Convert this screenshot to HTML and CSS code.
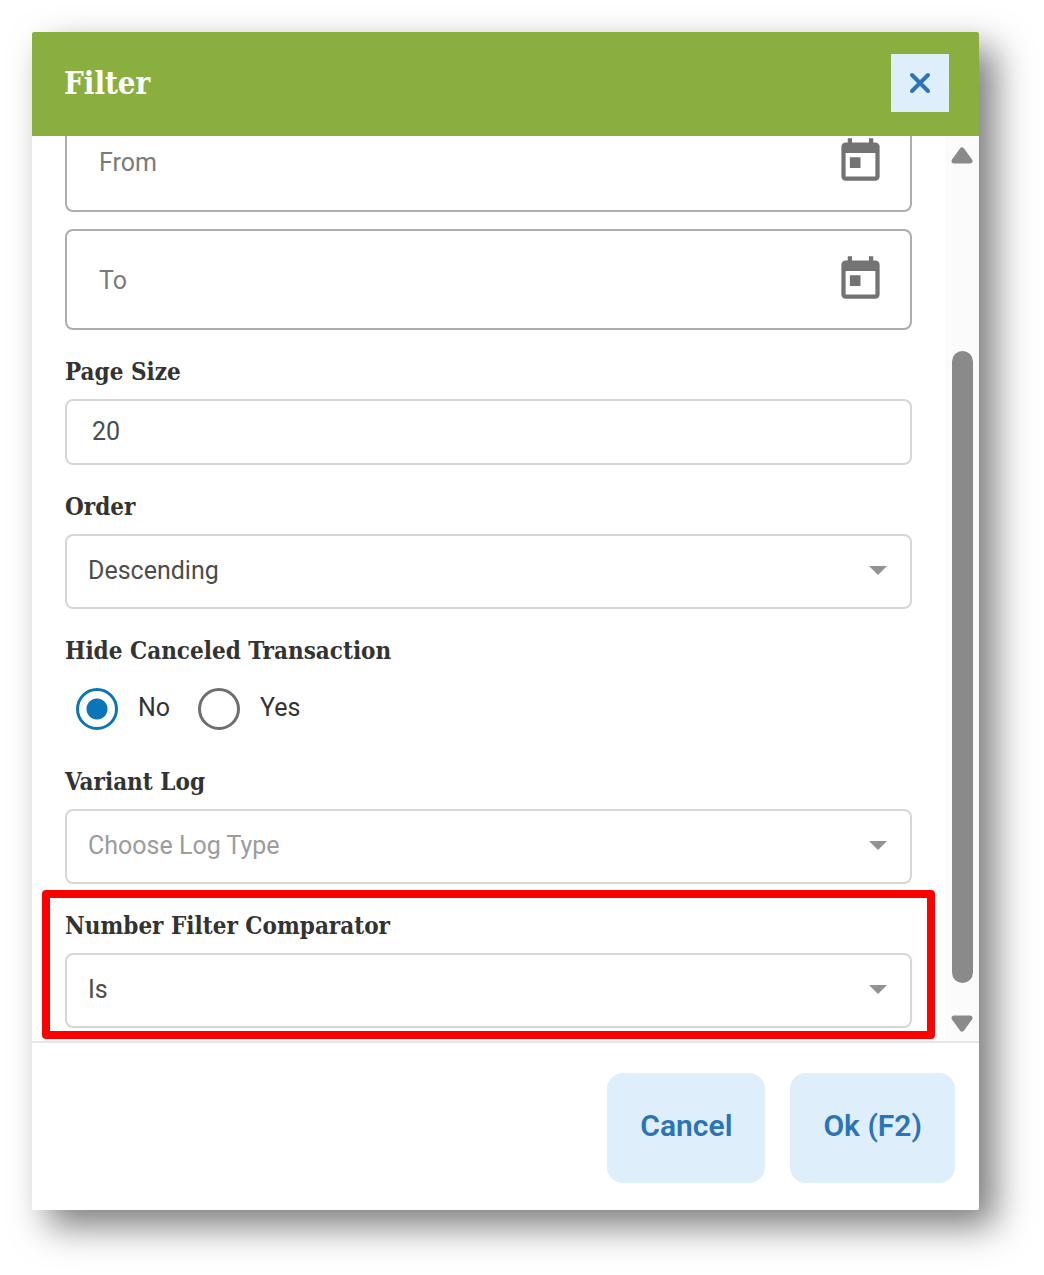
FILE: index.html
```html
<!DOCTYPE html>
<html lang="en">
<head>
<meta charset="utf-8">
<meta name="viewport" content="width=device-width, initial-scale=1">
<title>Filter</title>
<link rel="stylesheet" href="styles.css">
</head>
<body>
<form class="dialog" role="dialog" aria-labelledby="dialog-title">
  <header class="dialog-header">
    <h1 class="dialog-title" id="dialog-title">Filter</h1>
    <button class="close-button" type="button" aria-label="Close">
      <svg class="close-icon" viewBox="0 0 22 22" aria-hidden="true"><path d="M3 3 19 19M19 3 3 19"/></svg>
    </button>
  </header>

  <div class="dialog-body">
    <div class="fields">
      <div class="date-box">
        <input class="date-input" type="text" placeholder="From" aria-label="From">
        <button class="date-button" type="button" aria-label="Pick start date">
          <svg class="date-icon" viewBox="0 0 24 24" aria-hidden="true"><path d="M19 3h-1V1h-2v2H8V1H6v2H5c-1.110 0-1.990.9-1.990 2L3 19c0 1.100.89 2 2 2h14c1.100 0 2-.9 2-2V5c0-1.100-.9-2-2-2zm0 16H5V8h14v11zM7 10h5v5H7z"/></svg>
        </button>
      </div>
      <div class="date-box">
        <input class="date-input" type="text" placeholder="To" aria-label="To">
        <button class="date-button" type="button" aria-label="Pick end date">
          <svg class="date-icon" viewBox="0 0 24 24" aria-hidden="true"><path d="M19 3h-1V1h-2v2H8V1H6v2H5c-1.110 0-1.990.9-1.990 2L3 19c0 1.100.89 2 2 2h14c1.100 0 2-.9 2-2V5c0-1.100-.9-2-2-2zm0 16H5V8h14v11zM7 10h5v5H7z"/></svg>
        </button>
      </div>

      <div class="field">
        <label class="field-label" for="page-size">Page Size</label>
        <input class="text-input" id="page-size" type="text" inputmode="numeric" value="20">
      </div>

      <div class="field">
        <label class="field-label" for="order">Order</label>
        <div class="select-box">
          <select class="select" id="order"><option>Descending</option><option>Ascending</option></select>
          <svg class="select-arrow" viewBox="0 0 18 9" aria-hidden="true"><path d="M0 0h18L9 9z"/></svg>
        </div>
      </div>

      <fieldset class="field">
        <legend class="field-label">Hide Canceled Transaction</legend>
        <div class="radio-row">
          <label class="radio-option"><input class="radio" type="radio" name="hide" checked><span class="radio-text">No</span></label>
          <label class="radio-option"><input class="radio" type="radio" name="hide"><span class="radio-text">Yes</span></label>
        </div>
      </fieldset>

      <div class="field">
        <label class="field-label" for="variant-log">Variant Log</label>
        <div class="select-box">
          <select class="select select-empty" id="variant-log"><option>Choose Log Type</option></select>
          <svg class="select-arrow" viewBox="0 0 18 9" aria-hidden="true"><path d="M0 0h18L9 9z"/></svg>
        </div>
      </div>

      <div class="field highlighted">
        <label class="field-label" for="comparator">Number Filter Comparator</label>
        <div class="select-box">
          <select class="select" id="comparator"><option>Is</option></select>
          <svg class="select-arrow" viewBox="0 0 18 9" aria-hidden="true"><path d="M0 0h18L9 9z"/></svg>
        </div>
      </div>
    </div>

    <div class="scrollbar" aria-hidden="true">
      <svg class="scroll-arrow" viewBox="0 0 24 18"><path d="M12 3 20 14H4z"/></svg>
      <div class="scroll-track"><div class="scroll-thumb"></div></div>
      <svg class="scroll-arrow" viewBox="0 0 24 18"><path d="M12 15 20 4H4z"/></svg>
    </div>
  </div>

  <footer class="dialog-footer">
    <button class="action" type="button">Cancel</button>
    <button class="action" type="submit">Ok (F2)</button>
  </footer>
</form>
</body>
</html>
```
FILE: styles.css
```css
* {
  box-sizing: border-box;
}

body {
  margin: 0;
  height: 100vh;
  padding: 32px 65px 65px 32px;
  background: #fff;
  color: #333;
  font-family: Roboto, "Liberation Sans", sans-serif;
  font-size: 25px;
  line-height: 30px;
}

button,
input,
select {
  margin: 0;
  font: inherit;
}

.dialog {
  display: flex;
  flex-direction: column;
  height: 100%;
  background: #fff;
  border-radius: 2px;
  box-shadow: 16px 16px 36px rgba(0, 0, 0, 0.52);
}

.dialog-header {
  display: flex;
  align-items: center;
  justify-content: space-between;
  height: 104px;
  padding: 0 30px 2px 32px;
  background: #8aaf3f;
  border-radius: 2px 2px 0 0;
}

.dialog-title {
  margin: 0;
  color: #fff;
  font-family: "Roboto Slab", "DejaVu Serif Condensed", "DejaVu Serif", serif;
  font-size: 31px;
  font-weight: 600;
  line-height: 40px;
}

.close-button {
  display: grid;
  place-items: center;
  width: 58px;
  height: 58px;
  padding: 0;
  border: 0;
  background: #dfeefb;
}

.close-icon {
  width: 22px;
  height: 22px;
  fill: none;
  stroke: #2b74b8;
  stroke-width: 4;
  stroke-linecap: round;
}

.dialog-body {
  display: flex;
  flex: 1;
  min-height: 0;
  overflow: hidden;
}

.fields {
  display: flex;
  flex: 1;
  flex-direction: column;
  justify-content: flex-end;
  padding: 0 33px 13px;
}

.date-box {
  display: flex;
  flex: none;
  align-items: center;
  height: 101px;
  padding: 0 24px 0 32px;
  border: 2px solid #adadad;
  border-radius: 8px;
}

.date-box + .date-box {
  margin-top: 17px;
}

.date-input {
  flex: 1;
  min-width: 0;
  padding: 2px 0 0;
  border: 0;
  background: none;
}

.date-input::placeholder {
  color: #7a7a7a;
  opacity: 1;
}

.date-button {
  padding: 0;
  border: 0;
  background: none;
}

.date-icon {
  display: block;
  width: 51px;
  height: 51px;
  fill: #737373;
}

.field {
  flex: none;
  min-width: 0;
  margin: 27px 0 0;
  padding: 0;
  border: 0;
}

.field-label {
  display: block;
  margin-bottom: 12px;
  padding: 0;
  font-family: "Roboto Slab", "DejaVu Serif Condensed", "DejaVu Serif", serif;
  font-size: 24px;
  font-weight: 600;
}

.text-input {
  display: block;
  width: 100%;
  height: 66px;
  padding: 0 25px 2px;
  border: 2px solid #d6d6d6;
  border-radius: 8px;
  background: #fff;
  color: #4d4d4d;
}

.select-box {
  display: grid;
  align-items: center;
}

.select {
  grid-area: 1 / 1;
  width: 100%;
  height: 75px;
  padding: 0 60px 2px 21px;
  border: 2px solid #d6d6d6;
  border-radius: 8px;
  appearance: none;
  background: #fff;
  color: #4d4d4d;
}

.select-empty {
  color: #9c9c9c;
}

.select-arrow {
  grid-area: 1 / 1;
  justify-self: end;
  width: 18px;
  height: 9px;
  margin: 0 25px 3px 0;
  fill: #929292;
  pointer-events: none;
}

.radio-row {
  display: flex;
  align-items: center;
  gap: 28px;
  height: 62px;
  padding-left: 11px;
}

.radio-option {
  display: flex;
  align-items: center;
  gap: 20px;
}

.radio-text {
  padding-bottom: 3px;
}

.radio {
  width: 42px;
  height: 42px;
  border: 3px solid #6e6e6e;
  border-radius: 50%;
  appearance: none;
}

.radio:checked {
  border-color: #0a76b7;
  background: radial-gradient(circle, #0a76b7 10px, transparent 11px);
}

/* Callout frame drawn around the field */
.highlighted {
  position: relative;
}

.highlighted::after {
  content: "";
  position: absolute;
  inset: -21px -23px -11px;
  border: 8px solid #f00;
  border-radius: 4px;
  pointer-events: none;
}

.scrollbar {
  display: flex;
  flex-direction: column;
  align-items: center;
  width: 34px;
  padding: 11px 0 9px;
  background: #fbfbfb;
}

.scroll-arrow {
  flex: none;
  width: 24px;
  height: 18px;
  fill: #8a8a8a;
  stroke: #8a8a8a;
  stroke-width: 5;
  stroke-linejoin: round;
}

.scroll-track {
  display: grid;
  flex: 1;
  grid-template-rows: 186fr 632fr 31fr;
}

.scroll-thumb {
  grid-row: 2;
  width: 21px;
  border-radius: 11px;
  background: #8a8a8a;
}

.dialog-footer {
  display: flex;
  justify-content: flex-end;
  gap: 25px;
  padding: 30px 24px 27px;
  border-top: 2px solid #e3e7eb;
}

.action {
  height: 110px;
  padding: 0 33px 4px;
  border: 0;
  border-radius: 16px;
  background: #dfeefb;
  color: #2b74b8;
  font-size: 30px;
  font-weight: 600;
}
```
